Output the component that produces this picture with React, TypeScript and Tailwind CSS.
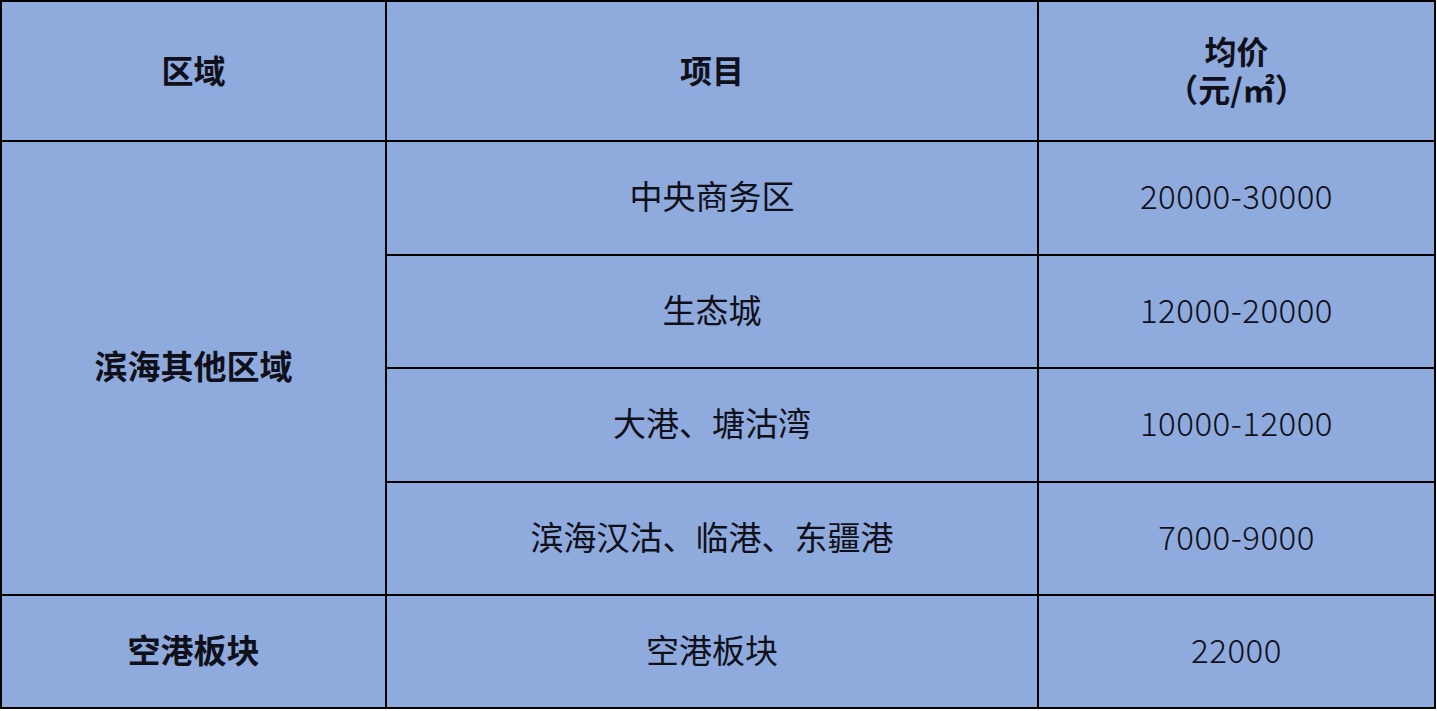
import React from "react";

const rows = [
  { item: "中央商务区", price: "20000-30000" },
  { item: "生态城", price: "12000-20000" },
  { item: "大港、塘沽湾", price: "10000-12000" },
  { item: "滨海汉沽、临港、东疆港", price: "7000-9000" },
];

const cell = "bg-[#8faadc] flex items-center justify-center text-center pb-[4px]";

export default function App() {
  return (
    <div className="w-[1437px] h-[711px] bg-white font-['Noto_Sans_CJK_SC',sans-serif] text-[#10101a] text-[33px]">
      <div className="grid w-[1436px] grid-cols-[383px_650px_395px] grid-rows-[138px_112px_111px_112px_111px_111px] gap-[2px] p-[2px] bg-black">
        <div className={`${cell} font-bold text-[32px]`}>区域</div>
        <div className={`${cell} font-bold text-[32px]`}>项目</div>
        <div className={`${cell} font-bold text-[32px] leading-[38px]`}>
          均价
          <br />
          （元/㎡）
        </div>

        <div className={`${cell} row-span-4 font-bold`}>滨海其他区域</div>
        {rows.map((r, i) => (
          <React.Fragment key={i}>
            <div className={cell}>{r.item}</div>
            <div className={`${cell} font-light tracking-[0.5px]`}>{r.price}</div>
          </React.Fragment>
        ))}

        <div className={`${cell} font-bold`}>空港板块</div>
        <div className={cell}>空港板块</div>
        <div className={`${cell} font-light tracking-[0.5px]`}>22000</div>
      </div>
    </div>
  );
}
